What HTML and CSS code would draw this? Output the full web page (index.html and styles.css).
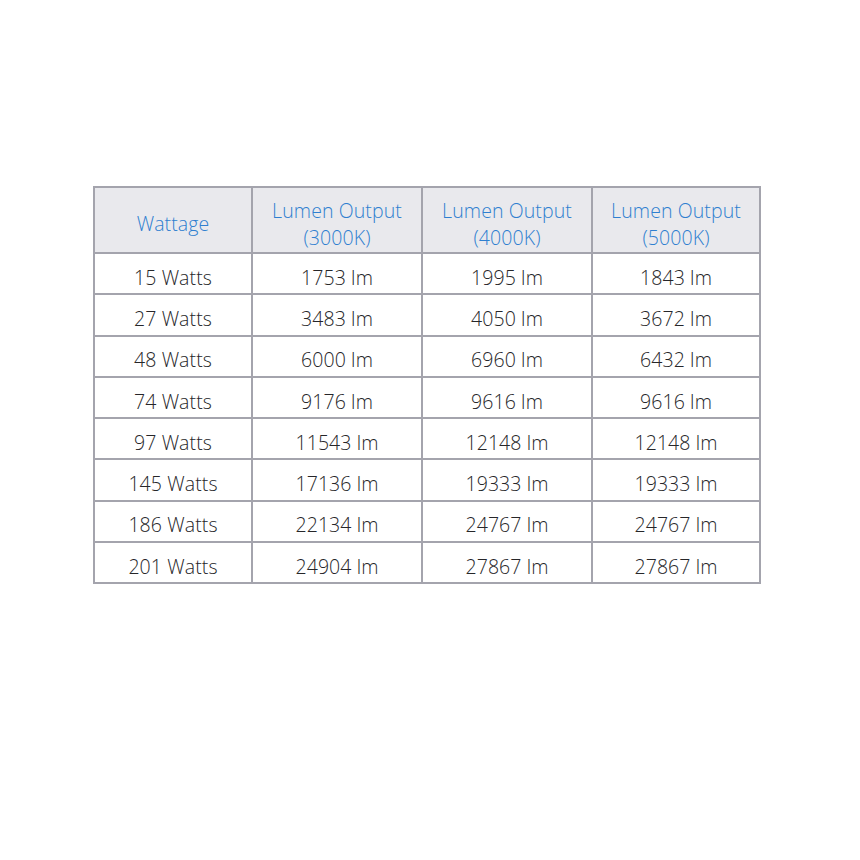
FILE: index.html
```html
<!DOCTYPE html>
<html>
<head>
<meta charset="utf-8">
<link rel="stylesheet" href="styles.css">
</head>
<body>
<table class="lumens">
  <colgroup>
    <col class="c1"><col class="c2"><col class="c3"><col class="c4">
  </colgroup>
  <thead>
    <tr>
      <th>Wattage</th>
      <th>Lumen Output<br>(3000K)</th>
      <th>Lumen Output<br>(4000K)</th>
      <th>Lumen Output<br>(5000K)</th>
    </tr>
  </thead>
  <tbody>
    <tr><td>15 Watts</td><td>1753 lm</td><td>1995 lm</td><td>1843 lm</td></tr>
    <tr><td>27 Watts</td><td>3483 lm</td><td>4050 lm</td><td>3672 lm</td></tr>
    <tr><td>48 Watts</td><td>6000 lm</td><td>6960 lm</td><td>6432 lm</td></tr>
    <tr><td>74 Watts</td><td>9176 lm</td><td>9616 lm</td><td>9616 lm</td></tr>
    <tr><td>97 Watts</td><td>11543 lm</td><td>12148 lm</td><td>12148 lm</td></tr>
    <tr><td>145 Watts</td><td>17136 lm</td><td>19333 lm</td><td>19333 lm</td></tr>
    <tr><td>186 Watts</td><td>22134 lm</td><td>24767 lm</td><td>24767 lm</td></tr>
    <tr><td>201 Watts</td><td>24904 lm</td><td>27867 lm</td><td>27867 lm</td></tr>
  </tbody>
</table>
</body>
</html>
```

FILE: styles.css
```css
html, body {
  margin: 0;
  padding: 0;
  background: #ffffff;
}
body {
  padding: 186px 0 0 93px;
  font-family: "Open Sans", "Liberation Sans", sans-serif;
}
.lumens {
  border-collapse: collapse;
  table-layout: fixed;
  width: 666px;
  border: 2px solid #a4a4ad;
}
.c1 { width: 158px; }
.c2 { width: 170px; }
.c3 { width: 170px; }
.c4 { width: 168px; }
.lumens th,
.lumens td {
  border: 2px solid #a4a4ad;
  text-align: center;
  font-weight: 300;
  font-size: 19.5px;
  letter-spacing: 0.1px;
}
.lumens th {
  background: #e9e9ed;
  color: #2f7fd0;
  height: 55px;
  padding: 9px 0 0;
  line-height: 26.6px;
}
.lumens td {
  color: #262629;
  height: 31.3px;
  padding: 8px 0 0;
  line-height: 24px;
}
```
